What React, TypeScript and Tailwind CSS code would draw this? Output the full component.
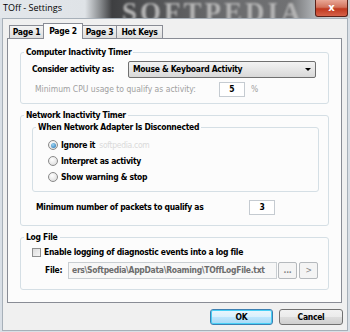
const tabs = [
  { label: "Page 1", w: "w-[35px]", active: false },
  { label: "Page 2", w: "w-[40px]", active: true },
  { label: "Page 3", w: "w-[35px]", active: false },
  { label: "Hot Keys", w: "w-[47px]", active: false },
];

function Radio({ checked, label }: { checked?: boolean; label: string }) {
  return (
    <div className="flex h-[16px] items-center">
      <span className="flex h-[10px] w-[10px] items-center justify-center rounded-full border border-[#8a8a8a] bg-[radial-gradient(circle_at_40%_35%,#ffffff,#d6d6d6)]">
        {checked && (
          <span className="h-[5px] w-[5px] rounded-full bg-[radial-gradient(circle_at_40%_35%,#9fd6f4,#1e6fb0)]" />
        )}
      </span>
      <span className="ml-[3px]">{label}</span>
    </div>
  );
}

function Box({ title, className, children }: { title: string; className?: string; children: React.ReactNode }) {
  return (
    <fieldset className={`rounded-[3px] border border-[#d5dfe5] ${className ?? ""}`}>
      <legend className="ml-[3px] px-[2px] leading-[11px]">{title}</legend>
      {children}
    </fieldset>
  );
}

export default function App() {
  return (
    <div className="flex h-[332px] w-[350px] flex-col bg-[#d9dfe6] text-[8.5px] font-bold tracking-[-0.3px] text-black font-['DejaVu_Sans_Condensed','DejaVu_Sans',sans-serif]">
      {/* title bar */}
      <div className="relative h-[18px] shrink-0 overflow-hidden bg-[linear-gradient(90deg,#e3e7eb_0px,#dfe3e7_85px,#8a8d90_100px,#3e3f41_112px,#4d4e50_140px,#6a6b6d_220px,#707173_290px,#a9acaf_312px,#c9cdd1_330px)]">
        <span className="absolute left-[122px] top-[-8px] whitespace-nowrap font-['Liberation_Serif',serif] text-[27px] font-bold tracking-[3px] text-[#b4b4b4] blur-[1.3px]">
          SOFTPEDIA
        </span>
        <span className="absolute left-[3px] top-[2px] font-['Open_Sans',sans-serif] text-[9px] font-normal leading-[12px] tracking-normal text-black">
          TOff - Settings
        </span>
        <div className="absolute right-[2px] top-0 flex h-[17px] w-[33px] items-center justify-center rounded-b-[3px] border border-t-0 border-[#5a2119] bg-[linear-gradient(180deg,#e9a796_0%,#d2735d_45%,#c0391f_55%,#d6624a_100%)]">
          <span className="font-['DejaVu_Sans',sans-serif] text-[10px] font-bold leading-none tracking-normal text-white">x</span>
        </div>
      </div>

      {/* client */}
      <div className="mx-[2px] mb-[1px] flex flex-1 flex-col border border-[#a7b0b9] bg-[#f0f0f0]">
        <div className="ml-[7px] mt-[4px] flex h-[15px] items-end">
          {tabs.map((t) =>
            t.active ? (
              <div
                key={t.label}
                className={`relative z-10 -mb-px -ml-px flex h-[16px] ${t.w} items-start justify-center border border-b-0 border-[#898c95] bg-[#fcfcfc] pt-[1px]`}
              >
                {t.label}
              </div>
            ) : (
              <div
                key={t.label}
                className={`-ml-px flex h-[13px] ${t.w} items-center justify-center border border-b-0 border-[#898c95] bg-[linear-gradient(180deg,#f4f4f4,#dedede)]`}
              >
                {t.label}
              </div>
            )
          )}
        </div>

        <div className="ml-[4px] h-[265px] w-[335px] border border-[#898c95] bg-[#fcfcfc] px-[12px]">
          <Box title="Computer Inactivity Timer" className="mt-[8px] h-[57px]">
            <div className="mt-[3px] flex h-[17px] items-center pl-[11px]">
              <span className="w-[96px]">Consider activity as:</span>
              <div className="flex h-[17px] w-[188px] items-center justify-between rounded-[2px] border border-[#707070] bg-[linear-gradient(180deg,#f3f3f3,#e6e6e6_50%,#d8d8d8)] pl-[4px] pr-[4px]">
                <span>Mouse &amp; Keyboard Activity</span>
                <span className="h-0 w-0 border-x-[3px] border-t-[3px] border-x-transparent border-t-black" />
              </div>
            </div>
            <div className="mt-[4px] flex h-[15px] items-center pl-[14px] font-normal tracking-normal text-[#a0a0a0]">
              <span className="w-[184px]">Minimum CPU usage to qualify as activity:</span>
              <span className="flex h-[15px] w-[26px] items-center justify-center border border-[#c5cbd1] bg-white font-bold text-black">
                5
              </span>
              <span className="ml-[6px]">%</span>
            </div>
          </Box>

          <Box title="Network Inactivity Timer" className="mt-[6px] h-[116px]">
            <Box title="When Network Adapter Is Disconnected" className="ml-[11px] mt-px h-[70px] w-[287px]">
              <div className="mt-[4px] flex flex-col pl-[15px]">
                <div className="flex items-center">
                  <Radio checked label="Ignore it" />
                  <span className="ml-[4px] font-normal text-[#dadada]">softpedia.com</span>
                </div>
                <Radio label="Interpret as activity" />
                <Radio label="Show warning & stop" />
              </div>
            </Box>
            <div className="mt-[8px] flex h-[15px] items-center pl-[15px]">
              <span className="w-[213px]">Minimum number of packets to qualify as</span>
              <span className="flex h-[15px] w-[26px] items-center justify-center border border-[#c5cbd1] bg-white">3</span>
            </div>
          </Box>

          <Box title="Log File" className="mt-[6px] h-[58px]">
            <div className="mt-[4px] flex h-[10px] items-center pl-[11px]">
              <span className="h-[9px] w-[9px] border border-[#8e8f8f] bg-[linear-gradient(135deg,#dcdcdc,#f6f6f6)]" />
              <span className="ml-[3px]">Enable logging of diagnostic events into a log file</span>
            </div>
            <div className="mt-[5px] flex h-[17px] items-center pl-[24px]">
              <span className="w-[23px]">File:</span>
              <span className="flex h-[17px] w-[209px] items-center overflow-hidden whitespace-nowrap border border-[#c9ced2] bg-[#f7f7f7] pl-[3px] text-[#6d6d6d]">
                ers\Softpedia\AppData\Roaming\TOffLogFile.txt
              </span>
              <span className="ml-px flex h-[17px] w-[19px] items-center justify-center rounded-[2px] border border-[#b5b9bd] bg-[#f4f4f4] text-[#838383]">
                ...
              </span>
              <span className="ml-[2px] flex h-[17px] w-[19px] items-center justify-center rounded-[2px] border border-[#b5b9bd] bg-[#f4f4f4] font-normal text-[#838383]">
                &gt;
              </span>
            </div>
          </Box>
        </div>

        <div className="ml-[207px] mt-[6px] flex gap-[6px]">
          <div className="flex h-[16px] w-[63px] items-center justify-center rounded-[3px] border border-[#3c7fb1] bg-[linear-gradient(180deg,#eaf6fd,#d9f0fc_50%,#bee6fd_51%,#a7d9f5)] shadow-[inset_0_0_0_1px_#48d0f6]">
            OK
          </div>
          <div className="flex h-[16px] w-[64px] items-center justify-center rounded-[3px] border border-[#707070] bg-[linear-gradient(180deg,#f2f2f2,#ebebeb_50%,#dddddd_51%,#cfcfcf)]">
            Cancel
          </div>
        </div>
      </div>
    </div>
  );
}
